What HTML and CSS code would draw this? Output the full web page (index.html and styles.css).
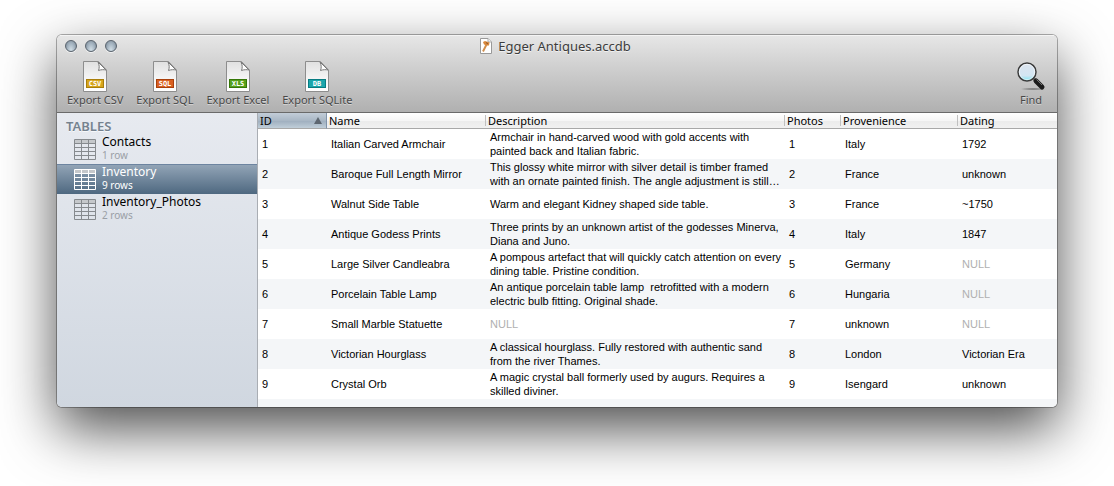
FILE: index.html
```html
<!DOCTYPE html>
<html lang="en">
<head>
<meta charset="utf-8">
<title>Egger Antiques.accdb</title>
<link rel="stylesheet" href="styles.css">
</head>
<body>
<svg class="defs" width="0" height="0" aria-hidden="true">
  <defs>
    <linearGradient id="paper" x1="0" y1="0" x2="0" y2="1"><stop offset="0" stop-color="#e0e0e0"/><stop offset=".6" stop-color="#f6f6f6"/><stop offset="1" stop-color="#fff"/></linearGradient>
    <linearGradient id="fold" x1="0" y1="1" x2="1" y2="0"><stop offset="0" stop-color="#fff"/><stop offset=".45" stop-color="#fff"/><stop offset="1" stop-color="#888"/></linearGradient>
    <linearGradient id="lens" x1="0" y1="0" x2="0" y2="1"><stop offset="0" stop-color="#dce4ef"/><stop offset=".7" stop-color="#d3e6f2"/><stop offset="1" stop-color="#74e4f2"/></linearGradient>
    <radialGradient id="ground"><stop offset="0" stop-color="#444" stop-opacity=".7"/><stop offset="1" stop-color="#444" stop-opacity="0"/></radialGradient>
    <symbol id="page" viewBox="0 0 24 31">
      <path d="M.5 .5H15.500L23.500 9V30.500H.5Z" fill="url(#paper)" stroke="#8d8d8d"/>
      <path d="M15 1C16.500 4 16.500 7 15.500 9.500C18 8.500 21 8.500 23 9Z" fill="url(#fold)" stroke="#777"/>
    </symbol>
    <symbol id="grid" viewBox="0 0 22 21">
      <path class="grid-head" d="M1 1H21V5H1Z"/>
      <path d="M.5 .5H21.500V20.500H.5ZM0 4.500H22M0 8.500H22M0 12.500H22M0 16.500H22M7.500 0V21M14.500 0V21" fill="none" stroke="currentColor"/>
    </symbol>
  </defs>
</svg>
<main class="window">
  <header class="chrome">
    <div class="titlebar">
      <div class="lights">
        <button class="light" type="button" aria-label="Close"></button>
        <button class="light" type="button" aria-label="Minimize"></button>
        <button class="light" type="button" aria-label="Zoom"></button>
      </div>
      <h1 class="title">
        <svg width="12" height="16" viewBox="0 0 12 16" aria-hidden="true">
          <path d="M.5 .5H8L11.500 4V15.500H.5Z" fill="#fff" stroke="#999"/>
          <path d="M8 .5V4H11.500" fill="#eee" stroke="#aaa"/>
          <path d="M3 13.500L6.500 6.500" stroke="#d09050" stroke-width="2"/>
          <path d="M3 4L5 3L9.500 4.500L9 7.500L7 7.500L4 6.500Z" fill="#d8883c"/>
          <path d="M6 4.500L8 6" stroke="#8a5428"/>
        </svg>
        <span>Egger Antiques.accdb</span>
      </h1>
    </div>
    <nav class="toolbar" aria-label="Toolbar">
      <button class="tool" type="button">
        <svg width="24" height="31" viewBox="0 0 24 31" aria-hidden="true"><use href="#page"/><rect x="3.500" y="18.500" width="17" height="8" fill="#d6a51c" stroke="#a97e0b"/><text class="tag" x="12" y="25">CSV</text></svg>
        <span>Export CSV</span>
      </button>
      <button class="tool" type="button">
        <svg width="24" height="31" viewBox="0 0 24 31" aria-hidden="true"><use href="#page"/><rect x="3.500" y="18.500" width="17" height="8" fill="#d95f20" stroke="#a8400c"/><text class="tag" x="12" y="25">SQL</text></svg>
        <span>Export SQL</span>
      </button>
      <button class="tool" type="button">
        <svg width="24" height="31" viewBox="0 0 24 31" aria-hidden="true"><use href="#page"/><rect x="3.500" y="18.500" width="17" height="8" fill="#56a01b" stroke="#357707"/><text class="tag" x="12" y="25">XLS</text></svg>
        <span>Export Excel</span>
      </button>
      <button class="tool" type="button">
        <svg width="24" height="31" viewBox="0 0 24 31" aria-hidden="true"><use href="#page"/><rect x="3.500" y="18.500" width="17" height="8" fill="#1ba6ac" stroke="#087c82"/><text class="tag" x="12" y="25">DB</text></svg>
        <span>Export SQLite</span>
      </button>
      <button class="tool tool-find" type="button">
        <svg width="30" height="31" viewBox="0 0 30 31" aria-hidden="true">
          <ellipse cx="17" cy="28" rx="13" ry="1.500" fill="url(#ground)"/>
          <path d="M17 17L20 20" stroke="#777" stroke-width="3"/>
          <path d="M20 20L26 26" stroke="#1c1c1c" stroke-width="5" stroke-linecap="round"/>
          <path d="M20.500 18.500L26 24" stroke="#777" stroke-width="1"/>
          <circle cx="11" cy="11" r="9" fill="url(#lens)" stroke="#3c3c3c" stroke-width="1.500"/>
          <circle cx="11" cy="11" r="7.700" fill="none" stroke="#fff" stroke-opacity=".6"/>
        </svg>
        <span>Find</span>
      </button>
    </nav>
  </header>
  <div class="content">
    <aside class="sidebar">
      <h2 class="sidebar-title">TABLES</h2>
      <a class="item" href="#contacts"><svg class="grid-icon" width="22" height="21" aria-hidden="true"><use href="#grid"/></svg><span class="item-text"><span class="item-name">Contacts</span><span class="item-count">1 row</span></span></a>
      <a class="item selected" href="#inventory" aria-current="page"><svg class="grid-icon" width="22" height="21" aria-hidden="true"><use href="#grid"/></svg><span class="item-text"><span class="item-name">Inventory</span><span class="item-count">9 rows</span></span></a>
      <a class="item" href="#photos"><svg class="grid-icon" width="22" height="21" aria-hidden="true"><use href="#grid"/></svg><span class="item-text"><span class="item-name">Inventory_Photos</span><span class="item-count">2 rows</span></span></a>
    </aside>
    <section class="records">
      <table class="data">
        <colgroup><col class="c-id"><col class="c-name"><col><col class="c-photos"><col class="c-origin"><col class="c-date"></colgroup>
        <thead>
          <tr>
            <th class="sorted" aria-sort="ascending"><button class="sort" type="button"><span>ID</span><svg width="8" height="7" viewBox="0 0 8 7" aria-hidden="true"><path d="M4 0L8 7H0Z" fill="#5d6670"/></svg></button></th>
            <th>Name</th><th>Description</th><th>Photos</th><th>Provenience</th><th>Dating</th>
          </tr>
        </thead>
        <tbody>
          <tr><td>1</td><td>Italian Carved Armchair</td><td>Armchair in hand-carved wood with gold accents with<br>painted back and Italian fabric.</td><td>1</td><td>Italy</td><td>1792</td></tr>
          <tr><td>2</td><td>Baroque Full Length Mirror</td><td>This glossy white mirror with silver detail is timber framed<br>with an ornate painted finish. The angle adjustment is still…</td><td>2</td><td>France</td><td>unknown</td></tr>
          <tr><td>3</td><td>Walnut Side Table</td><td>Warm and elegant Kidney shaped side table.</td><td>3</td><td>France</td><td>~1750</td></tr>
          <tr><td>4</td><td>Antique Godess Prints</td><td>Three prints by an unknown artist of the godesses Minerva,<br>Diana and Juno.</td><td>4</td><td>Italy</td><td>1847</td></tr>
          <tr><td>5</td><td>Large Silver Candleabra</td><td>A pompous artefact that will quickly catch attention on every<br>dining table. Pristine condition.</td><td>5</td><td>Germany</td><td class="null">NULL</td></tr>
          <tr><td>6</td><td>Porcelain Table Lamp</td><td>An antique porcelain table lamp&nbsp; retrofitted with a modern<br>electric bulb fitting. Original shade.</td><td>6</td><td>Hungaria</td><td class="null">NULL</td></tr>
          <tr><td>7</td><td>Small Marble Statuette</td><td class="null">NULL</td><td>7</td><td>unknown</td><td class="null">NULL</td></tr>
          <tr><td>8</td><td>Victorian Hourglass</td><td>A classical hourglass. Fully restored with authentic sand<br>from the river Thames.</td><td>8</td><td>London</td><td>Victorian Era</td></tr>
          <tr><td>9</td><td>Crystal Orb</td><td>A magic crystal ball formerly used by augurs. Requires a<br>skilled diviner.</td><td>9</td><td>Isengard</td><td>unknown</td></tr>
        </tbody>
      </table>
      <div class="filler"></div>
    </section>
  </div>
</main>
</body>
</html>
```
FILE: styles.css
```css
* { box-sizing: border-box; }

body {
  display: flex;
  min-height: 100vh;
  margin: 0;
  padding: 35px 57px 79px;
  background: #fff;
  color: #000;
  font-family: "Noto Sans", "Open Sans", sans-serif;
  font-size: 11px;
}

button {
  margin: 0;
  padding: 0;
  border: 0;
  background: none;
  color: inherit;
  font: inherit;
}

.defs { position: absolute; }

.window {
  display: flex;
  flex: 1;
  flex-direction: column;
  min-width: 0;
  overflow: hidden;
  border-radius: 5px;
  background: #fff;
  box-shadow: 0 0 0 1px rgba(0, 0, 0, .3), 0 22px 56px rgba(0, 0, 0, .7);
}

.chrome {
  padding: 0 11px 0 8px;
  border-top: 1px solid #f4f4f4;
  border-bottom: 1px solid #6a6a6a;
  background: linear-gradient(#e6e6e6, #d0d0d0 40%, #b0b0b0);
}

.titlebar {
  display: grid;
  grid-template-columns: 1fr auto 1fr;
  align-items: center;
  height: 20px;
}

.lights { display: flex; gap: 8px; }

.light {
  width: 12px;
  height: 12px;
  border: 1px solid #59636d;
  border-radius: 50%;
  background: radial-gradient(ellipse at 50% 90%, #d2dfe7, #a2b1be 55%, #74838f);
  box-shadow: 0 1px 0 rgba(255, 255, 255, .6);
}

.title {
  display: flex;
  align-items: center;
  gap: 6px;
  margin: 0;
  color: #3c3c3c;
  font-size: 13px;
  font-weight: 400;
  line-height: 18px;
  text-shadow: 0 1px 0 rgba(255, 255, 255, .6);
}

.toolbar {
  display: flex;
  gap: 13px;
  height: 56px;
  padding: 5px 0 0 2px;
}

.tool {
  display: flex;
  flex-direction: column;
  align-items: center;
  color: #484848;
  line-height: 16px;
  text-shadow: 0 1px 0 rgba(255, 255, 255, .45);
}

.tool-find { margin-left: auto; }

.tag {
  fill: #fff;
  font: bold 7px "DejaVu Sans Mono", monospace;
  text-anchor: middle;
  text-shadow: none;
}

.content {
  display: grid;
  flex: 1;
  grid-template-columns: 201px minmax(0, 1fr);
}

.sidebar {
  padding-top: 5px;
  border-right: 1px solid #a9adb3;
  background: linear-gradient(#e7eaf0, #d0d7e0);
}

.sidebar-title {
  margin: 0;
  padding-left: 9px;
  color: #75828f;
  font-size: 13px;
  font-weight: 600;
  line-height: 16px;
  text-shadow: 0 1px 0 rgba(255, 255, 255, .7);
}

.item {
  display: flex;
  align-items: center;
  gap: 6px;
  height: 30px;
  padding-left: 17px;
  color: #000;
  text-decoration: none;
}

.item-text { display: flex; flex-direction: column; padding-bottom: 2px; }
.item-name { font-size: 12px; line-height: 14px; }
.item-count { color: #9a9fa6; font-size: 10px; line-height: 12px; }
.grid-icon { color: #868a8e; }
.grid-head { fill: #c5c8cb; }

.selected {
  background: linear-gradient(#94a6b8, #4e6880);
  box-shadow: inset 0 1px 0 #6d84a0;
  color: #fff;
}

.selected .item-count,
.selected .grid-icon { color: #fff; }
.selected .grid-head { fill: #e9edf2; }

.records { display: flex; flex-direction: column; }

.data {
  width: 100%;
  border-collapse: separate;
  border-spacing: 0;
  table-layout: fixed;
}

.c-id { width: 69px; }
.c-name { width: 159px; }
.c-photos { width: 56px; }
.c-origin { width: 117px; }
.c-date { width: 99px; }

th {
  height: 16px;
  padding: 0 2px;
  border-bottom: 1px solid #a8a8a8;
  background: linear-gradient(#c0c0c0, #c0c0c0) right 2px / 1px 11px no-repeat, linear-gradient(#fff, #f6f6f6 50%, #ebebeb 50%, #f1f1f1);
  font-weight: 400;
  line-height: 15px;
  text-align: left;
}

th:last-child { background: linear-gradient(#fff, #f6f6f6 50%, #ebebeb 50%, #f1f1f1); }

th.sorted {
  border-right: 1px solid #7f92a9;
  background: linear-gradient(#c3cdd8, #a9b7c5 50%, #9dadbd 50%, #c0ced9);
}

.sort {
  display: flex;
  align-items: center;
  justify-content: space-between;
  width: 100%;
  padding-right: 2px;
  line-height: 15px;
}

td {
  height: 30px;
  padding: 0 4px;
  font-family: "Liberation Sans", Arial, sans-serif;
  line-height: 14px;
  white-space: nowrap;
  vertical-align: middle;
}

tbody tr:nth-child(even),
.filler { background: #f4f6f8; }

.filler { flex: 1; }
.null { color: #b0b0b0; }
```
